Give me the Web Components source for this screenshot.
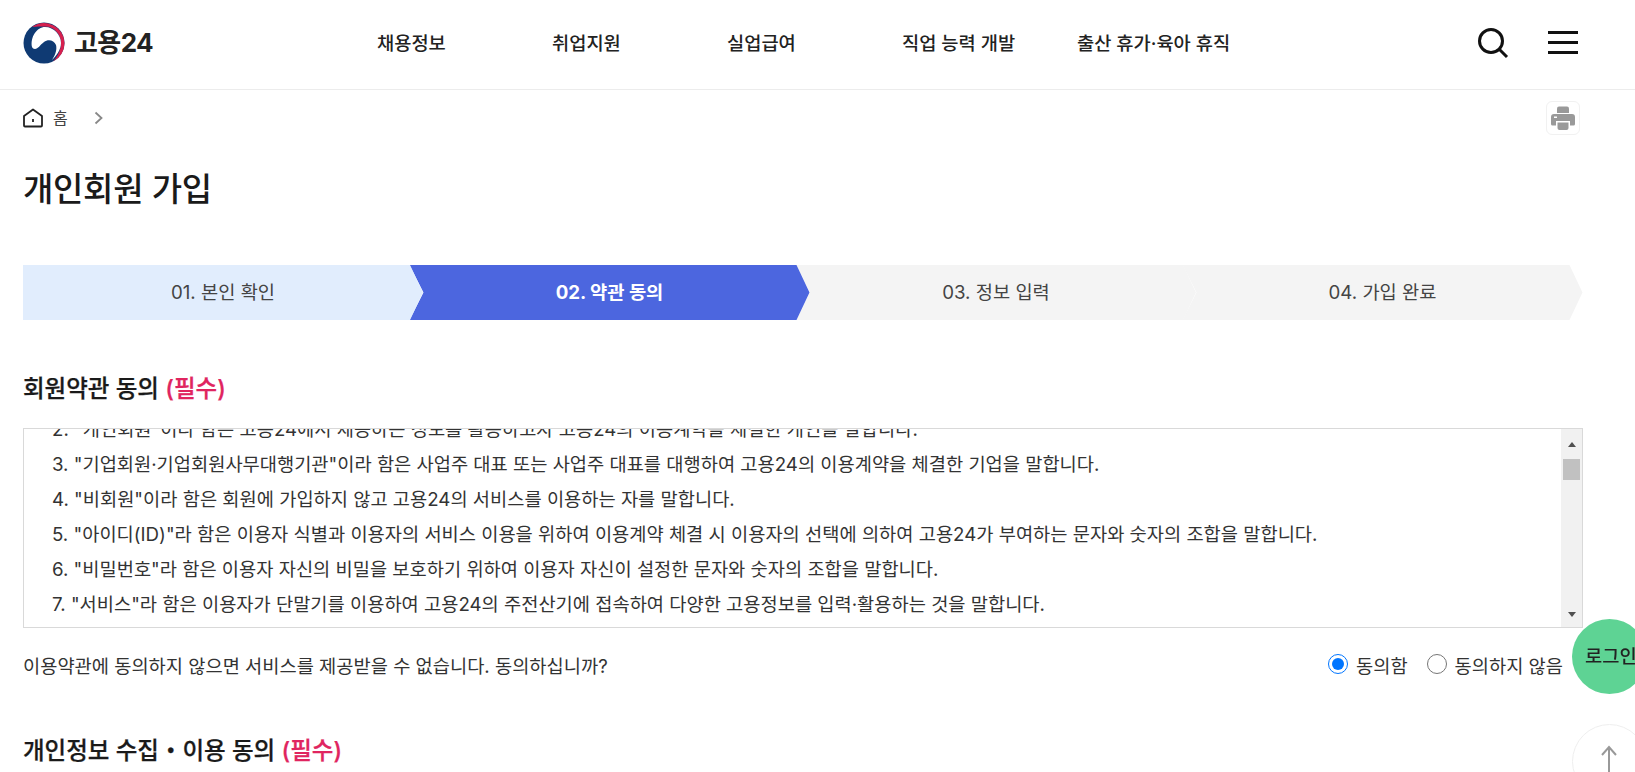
<!DOCTYPE html>
<html lang="ko"><head><meta charset="utf-8"><title>개인회원 가입</title>
<style>
html,body{margin:0;height:772px;overflow:hidden;background:#fff}
body{font-family:Inter,"Noto Sans CJK KR","Noto Sans",sans-serif;color:#222;letter-spacing:0}
</style></head><body>
<site-header></site-header>
<page-content>
  <bread-crumb></bread-crumb>
  <page-title>개인회원 가입</page-title>
  <step-bar>
    <step-item state="done">01. 본인 확인</step-item>
    <step-item state="active">02. 약관 동의</step-item>
    <step-item>03. 정보 입력</step-item>
    <step-item state="last">04. 가입 완료</step-item>
  </step-bar>
  <section-heading>회원약관 동의 <em slot="req">(필수)</em></section-heading>
  <terms-box>
    <div>2. "개인회원"이라 함은 고용24에서 제공하는 정보를 활용하고자 고용24의 이용계약을 체결한 개인을 말합니다.</div>
    <div>3. "기업회원·기업회원사무대행기관"이라 함은 사업주 대표 또는 사업주 대표를 대행하여 고용24의 이용계약을 체결한 기업을 말합니다.</div>
    <div>4. "비회원"이라 함은 회원에 가입하지 않고 고용24의 서비스를 이용하는 자를 말합니다.</div>
    <div>5. "아이디(ID)"라 함은 이용자 식별과 이용자의 서비스 이용을 위하여 이용계약 체결 시 이용자의 선택에 의하여 고용24가 부여하는 문자와 숫자의 조합을 말합니다.</div>
    <div>6. "비밀번호"라 함은 이용자 자신의 비밀을 보호하기 위하여 이용자 자신이 설정한 문자와 숫자의 조합을 말합니다.</div>
    <div>7. "서비스"라 함은 이용자가 단말기를 이용하여 고용24의 주전산기에 접속하여 다양한 고용정보를 입력·활용하는 것을 말합니다.</div>
  </terms-box>
  <consent-row name="a">이용약관에 동의하지 않으면 서비스를 제공받을 수 없습니다. 동의하십니까?</consent-row>
  <section-heading second>개인정보 수집・이용 동의 <em slot="req">(필수)</em></section-heading>
</page-content>
<float-buttons></float-buttons>
<script>
function def(name, html){
  customElements.define(name, class extends HTMLElement{
    connectedCallback(){
      if(this.shadowRoot) return;
      const r=this.attachShadow({mode:'open'});
      r.innerHTML=typeof html==='function'?html(this):html;
    }
  });
}
def('site-header',`<style>
:host{display:flex;align-items:center;height:89px;border-bottom:1px solid #ececec;box-sizing:content-box;padding:0 23px;position:relative}
.logo{display:flex;align-items:center;gap:9px;width:354px;margin-top:-3px}
.logo b{font-size:26px;font-weight:700;color:#222;letter-spacing:-.6px;line-height:1}
nav{display:flex;flex:1;font-size:18.7px;font-weight:500;color:#222;margin-top:-7px}
nav span{white-space:nowrap;width:175px}
.ic{display:flex;align-items:center;gap:39px;margin-right:34px;margin-top:-4px}
svg{display:block}
</style>
<div class="logo"><svg width="42" height="42" viewBox="0 0 42 42">
<circle cx="21" cy="21" r="20.500" fill="#0f3a73"/>
<path d="M9 5A20.500 20.500 0 0 1 41.500 21A20.500 20.500 0 0 1 30 39.500C35 34 38 28 38 21C38 12 31 4.500 22 4.500C17 4.500 13 4.500 9 5Z" fill="#d6204e"/>
<path d="M9 25C7 15 14 5 22 5C31 5 38 13 38 21C38 28 33 34 29 38C33 32 34 27 33 23C31 18 25 17 21 20C17 23 15 27 12 27C10.500 27 9.500 26 9 25Z" fill="#fff"/>
</svg><b>고용24</b></div>
<nav><span>채용정보</span><span>취업지원</span><span>실업급여</span><span>직업 능력 개발</span><span>출산 휴가·육아 휴직</span></nav>
<div class="ic">
<svg width="32" height="32" viewBox="0 0 32 32" fill="none" stroke="#111" stroke-width="3"><circle cx="14" cy="14" r="11.500"/><path d="M22.500 22.500L30 30"/></svg>
<svg width="30" height="24" viewBox="0 0 30 24" fill="#111"><rect y="0" width="30" height="3"/><rect y="10" width="30" height="3"/><rect y="20" width="30" height="3"/></svg>
</div>`);
def('page-content',`<style>:host{display:block;padding:0 53px 0 23px;width:1559px;box-sizing:content-box}</style><slot></slot>`);
def('bread-crumb',`<style>
:host{display:flex;align-items:center;height:60px;box-sizing:border-box;padding-bottom:4px;font-size:16px;color:#444}
.h{margin-right:10px}.c{margin-left:26px}
.p{margin-left:auto;margin-right:2px;width:34px;height:34px;box-sizing:border-box;border:1px solid #f1f1f1;border-radius:6px;display:flex;align-items:center;justify-content:center}
svg{display:block}
span{margin-top:-2px}
</style>
<svg class="h" width="20" height="20" viewBox="0 0 20 20" fill="none" stroke="#222" stroke-width="1.800" stroke-linejoin="round"><path d="M1 8L10 1.500L19 8V17.500A1 1 0 0 1 18 18.500H2A1 1 0 0 1 1 17.500Z"/><path d="M10 11V14"/></svg>
<span>홈</span>
<svg class="c" width="9" height="14" viewBox="0 0 9 14" fill="none" stroke="#888" stroke-width="1.800"><path d="M1.500 1.500L7.500 7L1.500 12.500"/></svg>
<div class="p"><svg width="24" height="24" viewBox="0 0 24 24" fill="#999"><path d="M6 2.500A2 2 0 0 1 8 .5H16A2 2 0 0 1 18 2.500V7H6Z"/><path d="M3 8H21A3 3 0 0 1 24 11V18A1.500 1.500 0 0 1 22.500 19.500H19V15H5V19.500H1.500A1.500 1.500 0 0 1 0 18V11A3 3 0 0 1 3 8Z"/><path d="M6.500 16.500H17.500V22A2 2 0 0 1 15.500 24H8.500A2 2 0 0 1 6.500 22Z"/><rect x="3" y="10.500" width="3" height="1.500" fill="#fff"/></svg></div>`);
def('page-title',`<style>:host{display:block;font-size:33px;font-weight:500;color:#1a1a1a;line-height:48px;margin-top:15px;margin-bottom:52px;letter-spacing:-.3px}</style><slot></slot>`);
def('step-bar',`<style>:host{display:flex;height:55px;margin-bottom:53px;width:1560px}::slotted(*){margin-left:-13.500px}::slotted(:first-child){margin-left:0;z-index:4}::slotted(:nth-child(2)){z-index:3}::slotted(:nth-child(3)){z-index:2}</style><slot></slot>`);
def('step-item',h=>{
  const s=h.getAttribute('state')||'';
  const bg=s==='done'?'#e1edfd':s==='active'?'#4c66df':'#f4f4f4';
  const col=s==='active'?'#fff':'#444';
  const poly=s==='done'?'0 0,387px 0,100% 50%,387px 100%,0 100%':'0 0,387px 0,100% 50%,387px 100%,0 100%,14px 50%';
  return `<style>:host{display:flex;position:relative;flex:0 0 400px;width:400px;height:55px;align-items:center;justify-content:center;font-size:18.700px;font-weight:${s==='active'?700:400};color:${col};background:${bg};clip-path:polygon(${poly})}span{margin-top:-4px}</style><span><slot></slot></span>`;
});
def('section-heading',h=>`<style>:host{display:block;font-size:23.500px;font-weight:500;-webkit-text-stroke:.25px currentColor;color:#1a1a1a;line-height:32px;margin-top:${h.hasAttribute('second')?'56px':'0'};margin-bottom:23px}::slotted(em){font-style:normal;color:#e0255f}</style><slot></slot> <slot name="req"></slot>`);
def('terms-box',`<style>
:host{display:flex;height:200px;width:1560px;border:1px solid #d9d9d9;box-sizing:border-box;font-size:18.700px;color:#333}
.clip{flex:1;overflow:hidden;padding-left:28px}
.list{margin-top:-17px}
::slotted(div){line-height:35px;white-space:nowrap}
.sb{width:21px;background:#f1f1f1;display:flex;flex-direction:column;align-items:center}
.ar{height:30px;width:100%;display:flex;align-items:center;justify-content:center;flex:none}
.up{width:0;height:0;border:4.500px solid transparent;border-bottom:5px solid #505050;border-top:0}
.dn{width:0;height:0;border:4.500px solid transparent;border-top:5px solid #505050;border-bottom:0}
.th{width:17px;height:21px;background:#c1c1c1;flex:none}
.sp{flex:1}
.ar.d{height:26px}
</style><div class="clip"><div class="list"><slot></slot></div></div>
<div class="sb"><div class="ar"><div class="up"></div></div><div class="th"></div><div class="sp"></div><div class="ar d"><div class="dn"></div></div></div>`);
def('consent-row',`<style>
:host{display:flex;align-items:center;height:30px;margin-top:21px;font-size:18.700px;color:#333;width:1560px}
.t{flex:1}
label{display:flex;align-items:center;gap:8px;margin-right:19px}
label:last-child{margin-right:20px}
input{width:20px;height:20px;margin:0;accent-color:#0075ff;flex:none}
</style><span class="t"><slot></slot></span>
<label><input type="radio" name="c" checked>동의함</label><label><input type="radio" name="c">동의하지 않음</label>`);
def('float-buttons',`<style>
:host{display:block}
.l{position:fixed;left:1572px;top:619px;width:75px;height:75px;border-radius:50%;background:#5ed394;display:flex;align-items:center;justify-content:flex-start;box-sizing:border-box;padding-left:13px;font-size:18.700px;font-weight:500;color:#222;white-space:nowrap;overflow:hidden}
.u{position:fixed;left:1572px;top:724px;width:75px;height:75px;border-radius:50%;background:#fff;border:1px solid #eee;box-sizing:border-box}
svg{position:absolute;left:24px;top:20px}
</style><div class="l"><span style="margin-top:-4px">로그인</span></div><div class="u"><svg width="24" height="40" viewBox="0 0 24 40" fill="none" stroke="#999" stroke-width="2"><path d="M12 2V40M5 10L12 2L19 10"/></svg></div>`);
</script>
</body></html>
